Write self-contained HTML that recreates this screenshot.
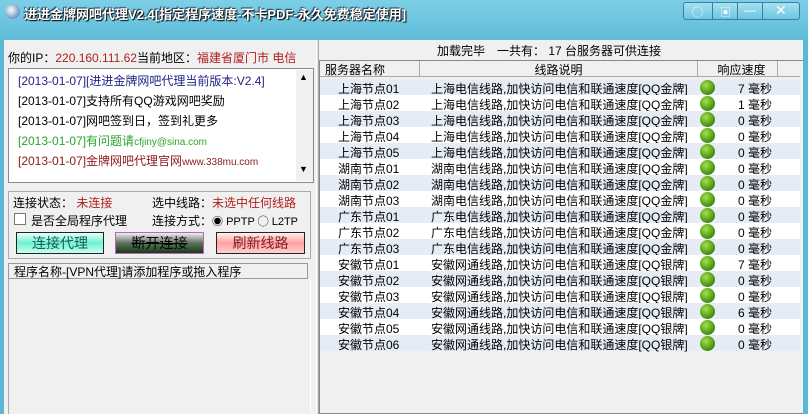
<!DOCTYPE html><html><head><meta charset="utf-8"><style>
*{margin:0;padding:0;box-sizing:border-box}
body{width:808px;height:414px;overflow:hidden;background:#62bfdc;font-family:"Liberation Sans","Noto Sans CJK SC",sans-serif;font-size:12px;color:#000;position:relative}
.a{position:absolute;white-space:nowrap}
.title{left:24px;top:4px;color:#fff;font-weight:bold;font-size:13px;text-shadow:1px 1px 1px #000,-1px -1px 1px #234;letter-spacing:0}
.client{left:4px;top:40px;width:799px;height:374px;background:#f0f0f0}
.log{left:8px;top:68px;width:306px;height:115px;background:#fff;border:1px solid #888}
.row{position:absolute;left:320px;width:480px;height:16px}
.btn{position:absolute;top:232px;height:22px;border:1px solid #222;text-align:center;font-size:14px;line-height:20px}
</style></head><body>
<div class="a" style="left:0;top:0;width:808px;height:40px;background:linear-gradient(#7ccfe6,#5fbcd9)"></div>
<div class="a" style="left:5px;top:4px;width:15px;height:15px;border-radius:50%;background:radial-gradient(circle at 40% 40%,#fff,#2a6aa8)"></div>
<div class="a title">进进金牌网吧代理V2.4[指定程序速度-不卡PDF-永久免费稳定使用]</div>
<div class="a" style="left:683px;top:2px;width:117px;height:18px;border:1px solid #3a7fa0;border-radius:3px;background:linear-gradient(#a8e0f0,#6cc6e2)"></div>
<div class="a" style="left:712px;top:3px;width:1px;height:16px;background:#3a7fa0"></div>
<div class="a" style="left:737px;top:3px;width:1px;height:16px;background:#3a7fa0"></div>
<div class="a" style="left:762px;top:3px;width:1px;height:16px;background:#3a7fa0"></div>
<div class="a" style="left:692px;top:4px;color:#fff;font-size:11px">◯</div>
<div class="a" style="left:720px;top:4px;color:#fff;font-size:11px">▣</div>
<div class="a" style="left:744px;top:3px;color:#fff;font-size:12px">—</div>
<div class="a" style="left:775px;top:2px;color:#fff;font-size:14px">✕</div>
<div class="a client"></div>
<div class="a" style="left:316px;top:40px;width:3px;height:374px;background:#e0e0e0;border-left:1px solid #fff;border-right:1px solid #aaa"></div>
<div class="a" style="left:8px;top:49px">你的IP：<span style="color:#b02020">220.160.111.62</span>当前地区：<span style="color:#b02020">福建省厦门市 电信</span></div>
<div class="a log"></div>
<div class="a" style="left:296px;top:70px;width:17px;height:111px;background:#f0f0f0"></div>
<div class="a" style="left:299px;top:72px;font-size:9px">▲</div>
<div class="a" style="left:299px;top:164px;font-size:9px">▼</div>
<div class="a" style="left:18px;top:72px;color:#22228a">[2013-01-07][进进金牌网吧代理当前版本:V2.4]</div>
<div class="a" style="left:18px;top:92px">[2013-01-07]支持所有QQ游戏网吧奖励</div>
<div class="a" style="left:18px;top:112px">[2013-01-07]网吧签到日，签到礼更多</div>
<div class="a" style="left:18px;top:132px;color:#2aa52a">[2013-01-07]有问题请<span style="font-size:10px">cfjiny@sina.com</span></div>
<div class="a" style="left:18px;top:152px;color:#8a1a1a">[2013-01-07]金牌网吧代理官网<span style="font-size:10px">www.338mu.com</span></div>
<div class="a" style="left:8px;top:191px;width:303px;height:68px;border:1px solid #aaa"></div>
<div class="a" style="left:13px;top:194px">连接状态： <span style="color:#b02020">未连接</span></div>
<div class="a" style="left:152px;top:194px">选中线路：<span style="color:#b02020">未选中任何线路</span></div>
<div class="a" style="left:14px;top:213px;width:12px;height:12px;background:#fff;border:1px solid #777"></div>
<div class="a" style="left:31px;top:212px">是否全局程序代理</div>
<div class="a" style="left:152px;top:212px">连接方式：<span style="font-size:11px">◉ PPTP ◯ L2TP</span></div>
<div class="btn" style="left:16px;width:88px;background:linear-gradient(#e8fff8,#70f0d0 50%,#c8fff0);color:#106050">连接代理</div>
<div class="btn" style="left:115px;width:89px;background:linear-gradient(#f0f0f0,#607060 50%,#104010);border-color:#c060c0;text-decoration:line-through">断开连接</div>
<div class="btn" style="left:216px;width:89px;background:linear-gradient(#fff0f0,#ffa0a0 50%,#ffd0d0);color:#802020">刷新线路</div>
<div class="a" style="left:8px;top:263px;width:300px;height:16px;background:#f0f0f0;border:1px solid #999"></div>
<div class="a" style="left:14px;top:263px">程序名称-[VPN代理]请添加程序或拖入程序</div>
<div class="a" style="left:8px;top:279px;width:303px;height:135px;border-left:1px solid #aaa;border-right:1px solid #fff"></div>
<div class="a" style="left:437px;top:42px">加载完毕　一共有： 17 台服务器可供连接</div>
<div class="a" style="left:319px;top:60px;width:484px;height:354px;border:1px solid #888;border-right:none;background:#f0f0f0"></div>
<div class="a" style="left:320px;top:61px;width:100px;height:16px;border-right:1px solid #aaa;border-bottom:1px solid #aaa;padding-left:5px">服务器名称</div>
<div class="a" style="left:420px;top:61px;width:278px;height:16px;border-right:1px solid #aaa;border-bottom:1px solid #aaa;text-align:center">线路说明</div>
<div class="a" style="left:698px;top:61px;width:80px;height:16px;border-right:1px solid #aaa;border-bottom:1px solid #aaa;text-align:center;padding-left:8px">响应速度</div>
<div class="a" style="left:778px;top:61px;width:22px;height:16px;border-bottom:1px solid #aaa"></div>
<div id="rows"></div>
<script>
var d=[["上海节点01","上海电信线路,加快访问电信和联通速度[QQ金牌]",7],["上海节点02","上海电信线路,加快访问电信和联通速度[QQ金牌]",1],["上海节点03","上海电信线路,加快访问电信和联通速度[QQ金牌]",0],["上海节点04","上海电信线路,加快访问电信和联通速度[QQ金牌]",0],["上海节点05","上海电信线路,加快访问电信和联通速度[QQ金牌]",0],["湖南节点01","湖南电信线路,加快访问电信和联通速度[QQ金牌]",0],["湖南节点02","湖南电信线路,加快访问电信和联通速度[QQ金牌]",0],["湖南节点03","湖南电信线路,加快访问电信和联通速度[QQ金牌]",0],["广东节点01","广东电信线路,加快访问电信和联通速度[QQ金牌]",0],["广东节点02","广东电信线路,加快访问电信和联通速度[QQ金牌]",0],["广东节点03","广东电信线路,加快访问电信和联通速度[QQ金牌]",0],["安徽节点01","安徽网通线路,加快访问电信和联通速度[QQ银牌]",7],["安徽节点02","安徽网通线路,加快访问电信和联通速度[QQ银牌]",0],["安徽节点03","安徽网通线路,加快访问电信和联通速度[QQ银牌]",0],["安徽节点04","安徽网通线路,加快访问电信和联通速度[QQ银牌]",6],["安徽节点05","安徽网通线路,加快访问电信和联通速度[QQ银牌]",0],["安徽节点06","安徽网通线路,加快访问电信和联通速度[QQ银牌]",0]];
var h="";d.forEach(function(r,i){var y=79+i*16;h+='<div class="row" style="top:'+y+'px;background:'+(i%2?'#fff':'#e6ecf5')+'"></div>'+
'<div class="a" style="left:338px;top:'+(y+1)+'px">'+r[0]+'</div>'+
'<div class="a" style="left:431px;top:'+(y+1)+'px">'+r[1]+'</div>'+
'<div class="a" style="left:700px;top:'+(y+1)+'px;width:15px;height:15px;border-radius:50%;background:radial-gradient(circle at 40% 35%,#a8e050,#4a9a10 60%,#2a5a08)"></div>'+
'<div class="a" style="left:738px;top:'+(y+1)+'px">'+r[2]+' 毫秒</div>';});
document.getElementById("rows").innerHTML=h;
</script>
<div class="a" style="left:803px;top:40px;width:5px;height:374px;background:#5ab8d6"></div>
<div class="a" style="left:0;top:40px;width:4px;height:374px;background:#5ab8d6"></div>
</body></html>
